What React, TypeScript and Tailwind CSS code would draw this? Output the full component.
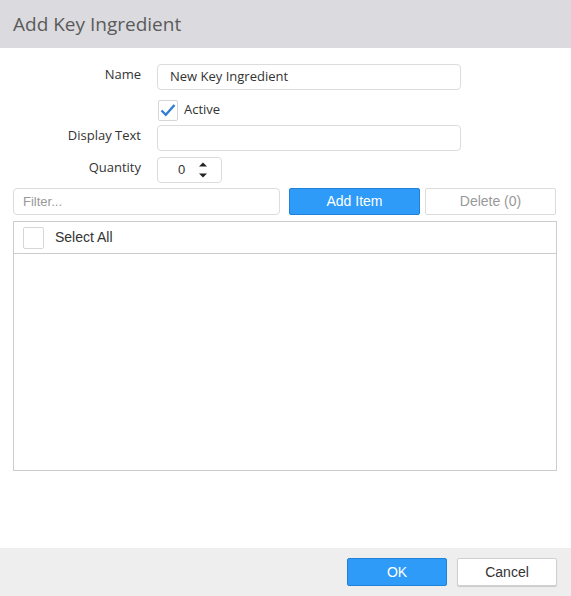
import React from "react";

export default function App() {
  const os = { fontFamily: '"Open Sans", "Noto Sans", sans-serif' };
  const ar = { fontFamily: '"Liberation Sans", Arial, sans-serif' };
  return (
    <div className="w-[571px] h-[596px] bg-white flex flex-col overflow-hidden" style={os}>
      <div className="h-[48px] bg-[#dadadf] flex items-center px-[13px] shrink-0">
        <span className="text-[19px] text-[#5a5a5a] leading-none">Add Key Ingredient</span>
      </div>
      <div className="flex-1 flex flex-col px-[13px] pt-[16px]">
        {/* Name */}
        <div className="flex h-[26px]">
          <div className="w-[128px] text-right text-[13px] text-[#333] leading-[20px]">Name</div>
          <div className="ml-[16px] w-[304px] h-[26px] border border-[#dcdcdc] rounded-[4px] flex items-center px-[12px] text-[13px] text-[#333]">
            New Key Ingredient
          </div>
        </div>
        {/* Active */}
        <div className="flex h-[26px] mt-[7px] items-center">
          <div className="w-[128px]" />
          <div className="ml-[17px] w-[20px] h-[21px] border border-[#d6d6d6] rounded-[2px] flex items-center justify-center">
            <svg width="16" height="14" viewBox="0 0 16 14">
              <path d="M1.5 7.5 L5.8 11.8 L14.5 2" fill="none" stroke="#2f7fd0" strokeWidth="2.4" />
            </svg>
          </div>
          <span className="ml-[6px] text-[13px] text-[#333]">Active</span>
        </div>
        {/* Display Text */}
        <div className="flex h-[26px] mt-[2px]">
          <div className="w-[128px] text-right text-[13px] text-[#333] leading-[20px]">Display Text</div>
          <div className="ml-[16px] w-[304px] h-[26px] border border-[#dcdcdc] rounded-[4px]" />
        </div>
        {/* Quantity */}
        <div className="flex h-[26px] mt-[6px]">
          <div className="w-[128px] text-right text-[13px] text-[#333] leading-[20px]">Quantity</div>
          <div className="ml-[16px] w-[65px] h-[26px] border border-[#dcdcdc] rounded-[4px] flex items-center">
            <span className="ml-[20px] text-[13px] text-[#333]" style={ar}>0</span>
            <svg className="ml-[12px]" width="12" height="18" viewBox="0 0 12 18">
              <path d="M2 5.5 L6 1.5 L10 5.5 Z" fill="#222" />
              <path d="M2 12.5 L6 16.5 L10 12.5 Z" fill="#222" />
            </svg>
          </div>
        </div>
        {/* Toolbar */}
        <div className="flex h-[27px] mt-[5px]">
          <div className="w-[267px] h-[27px] border border-[#dcdcdc] rounded-[4px] flex items-center px-[9px] text-[13px] text-[#999]" style={ar}>
            Filter...
          </div>
          <div className="ml-[9px] w-[131px] h-[27px] bg-[#2e9bf8] border border-[#1f82d8] rounded-[2px] flex items-center justify-center text-white text-[14px]" style={ar}>
            Add Item
          </div>
          <div className="ml-[5px] w-[131px] h-[27px] bg-white border border-[#dcdcdc] rounded-[2px] flex items-center justify-center text-[#999] text-[14px]" style={ar}>
            Delete (0)
          </div>
        </div>
        {/* Grid */}
        <div className="mt-[6px] w-[544px] h-[250px] border border-[#cccccc] flex flex-col">
          <div className="h-[32px] border-b border-[#cccccc] flex items-center">
            <div className="ml-[9px] w-[21px] h-[22px] border border-[#d6d6d6] rounded-[2px]" />
            <span className="ml-[11px] text-[14px] text-[#333]" style={ar}>Select All</span>
          </div>
        </div>
      </div>
      <div className="h-[48px] bg-[#eeeeee] flex items-center justify-end pr-[14px] shrink-0">
        <div className="w-[100px] h-[28px] bg-[#2e9bf8] border border-[#1f82d8] rounded-[2px] flex items-center justify-center text-white text-[14px]" style={ar}>
          OK
        </div>
        <div className="ml-[10px] w-[100px] h-[28px] bg-white border border-[#d0d0d0] rounded-[2px] shadow-[0_1px_1px_rgba(0,0,0,0.15)] flex items-center justify-center text-[#333] text-[14px]" style={ar}>
          Cancel
        </div>
      </div>
    </div>
  );
}
